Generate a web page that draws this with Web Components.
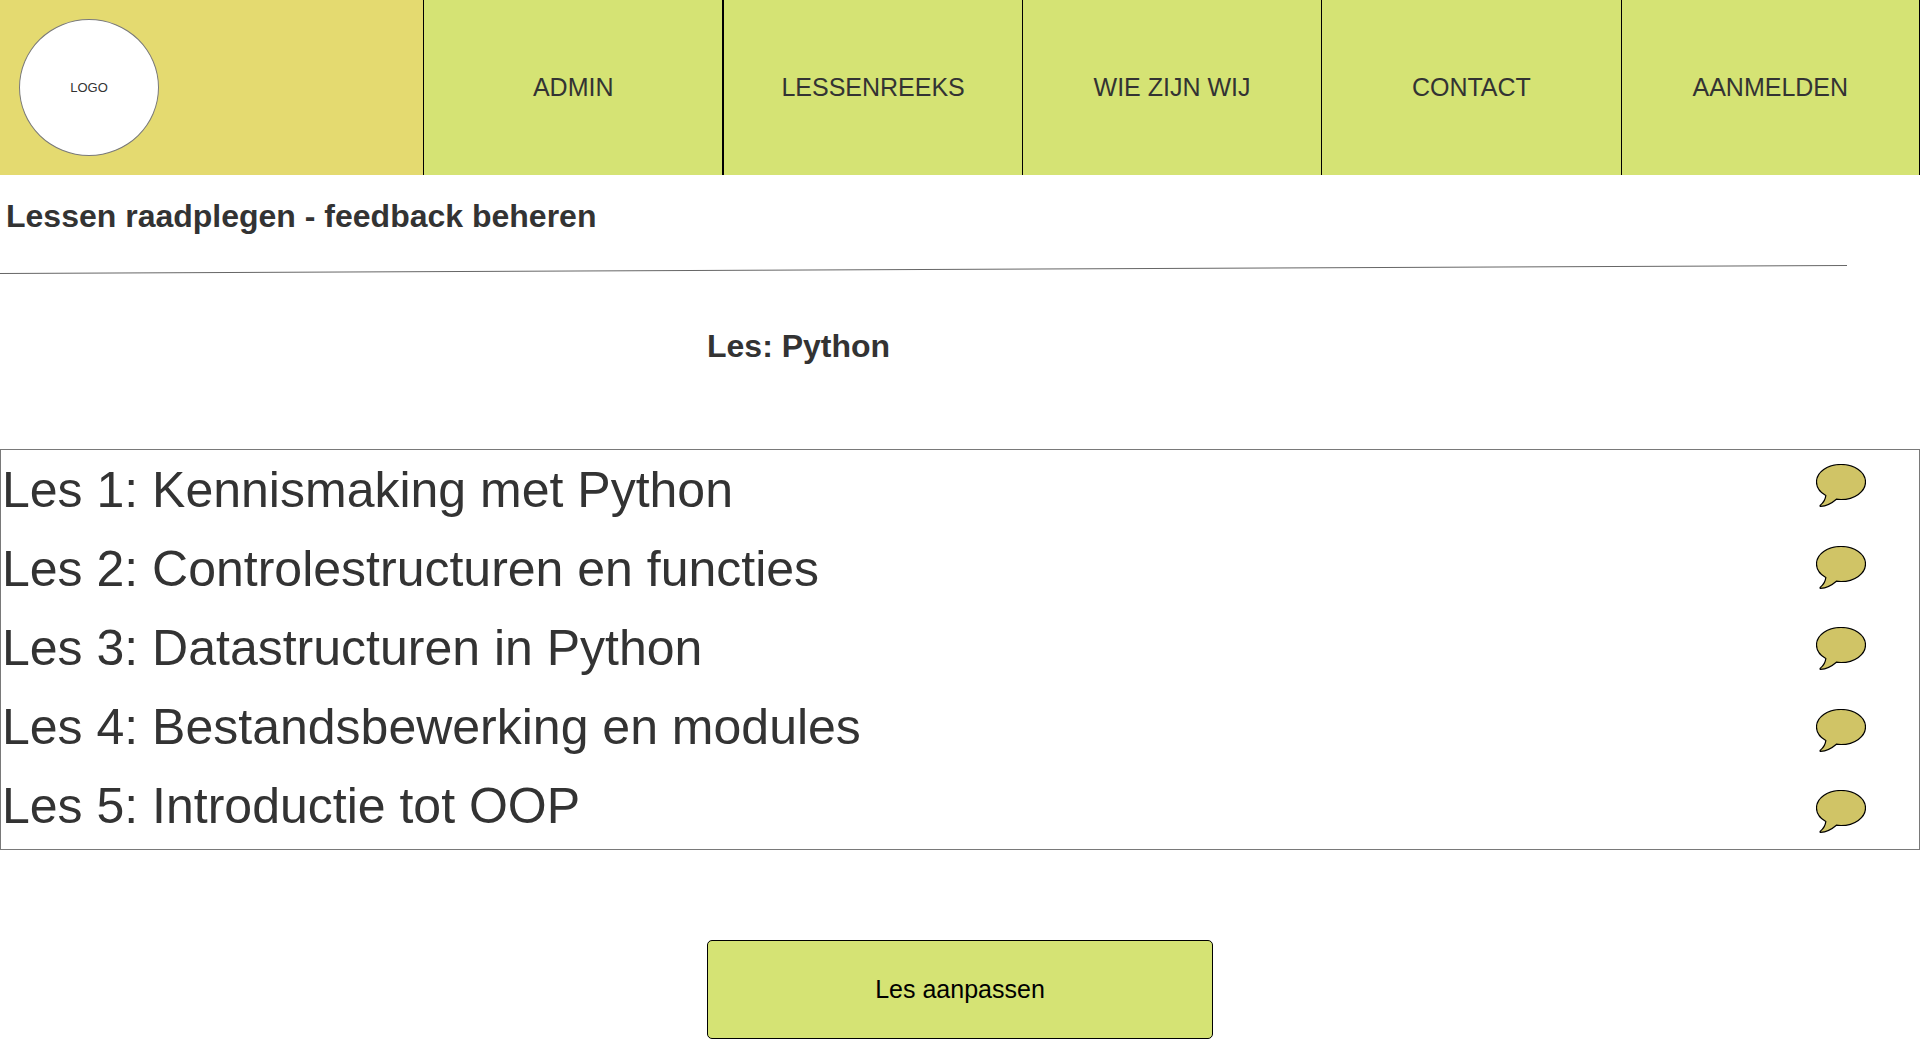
<!DOCTYPE html>
<html lang="nl">
<head>
<meta charset="utf-8">
<title>Lessen raadplegen - feedback beheren</title>
<style>
  body {
    margin: 0;
    background: #fff;
    color: #333;
    font-family: "Liberation Sans", Arial, sans-serif;
    font-size: 25px;
    line-height: 28px;
  }
</style>
</head>
<body>
<lesson-page></lesson-page>

<script>
  const define = (name, html) => {
    const template = document.createElement('template');
    template.innerHTML = html;
    customElements.define(name, class extends HTMLElement {
      constructor() {
        super();
        this.attachShadow({ mode: 'open' }).append(template.content.cloneNode(true));
      }
    });
  };

  define('site-logo', `
    <style>
      :host { display: flex; align-items: center; padding: 0 19px; background: #e4da70; }
      span {
        box-sizing: border-box; width: 140px; height: 137px;
        display: flex; align-items: center; justify-content: center;
        border: 1px solid #797979; border-radius: 50%; background: #fff;
        font-size: 13px; line-height: 16px;
      }
    </style>
    <span><slot></slot></span>`);

  define('nav-item', `
    <style>
      :host { display: flex; border-left: 1px solid #000; background: #d5e374; }
      :host(:last-child) { border-right: 1px solid #000; }
      :host([strong]) { border-left-width: 2px; }
      a {
        flex: 1; display: flex; align-items: center; justify-content: center;
        padding-bottom: 2px; color: inherit; text-decoration: none;
      }
    </style>
    <a href="#"><slot></slot></a>`);

  define('site-header', `
    <style>
      :host { display: grid; grid-template-columns: 423fr 1497fr; height: 175px; }
      nav { display: grid; grid-template-columns: repeat(5, 1fr); }
    </style>
    <site-logo>LOGO</site-logo>
    <nav>
      <nav-item>ADMIN</nav-item>
      <nav-item strong>LESSENREEKS</nav-item>
      <nav-item>WIE ZIJN WIJ</nav-item>
      <nav-item>CONTACT</nav-item>
      <nav-item>AANMELDEN</nav-item>
    </nav>`);

  define('slanted-rule', `
    <style>
      :host { display: block; }
      svg { display: block; width: 96.2%; height: 10px; }
    </style>
    <svg viewBox="0 0 100 10" preserveAspectRatio="none" aria-hidden="true">
      <line x1="0" y1="9.5" x2="100" y2="1.5" stroke="#666" vector-effect="non-scaling-stroke"/>
    </svg>`);

  define('feedback-button', `
    <style>
      :host { display: block; }
      button { display: block; padding: 0; border: 0; background: none; cursor: pointer; }
      svg { display: block; width: 50px; height: 43px; }
    </style>
    <button type="button" aria-label="Feedback">
      <svg viewBox="0 0 50 43" aria-hidden="true">
        <path d="M9.8 31.6C4 28.2.5 23.600.5 18 .5 8.300 11.500.500 25 .500S49.500 8.300 49.500 18 38.500 35.500 25 35.500C23.300 35.500 21.800 35.400 20.400 35.200 16.500 38.600 11 42 4.500 42.400 3.800 42.300 4 41.600 4.400 41.100 7.500 38.500 9.500 35 9.800 31.600Z" fill="#d0c466" stroke="#000" stroke-width="1.2"/>
      </svg>
    </button>`);

  define('lesson-list', `
    <style>
      :host { display: flex; justify-content: space-between; border: 1px solid #797979; }
      ol { list-style: none; margin: 0; padding: 1px 0 3px 1px; font-size: 50px; line-height: 79px; }
      .feedback { display: flex; flex-direction: column; justify-content: space-between; padding: 14px 53px 16px 0; }
    </style>
    <ol>
      <li>Les 1: Kennismaking met Python</li>
      <li>Les 2: Controlestructuren en functies</li>
      <li>Les 3: Datastructuren in Python</li>
      <li>Les 4: Bestandsbewerking en modules</li>
      <li>Les 5: Introductie tot OOP</li>
    </ol>
    <div class="feedback">
      <feedback-button></feedback-button>
      <feedback-button></feedback-button>
      <feedback-button></feedback-button>
      <feedback-button></feedback-button>
      <feedback-button></feedback-button>
    </div>`);

  define('action-button', `
    <style>
      :host { display: block; }
      button {
        width: 100%; height: 99px; padding: 0 0 2px; border: 1px solid #000; border-radius: 5px;
        background: #d5e374; color: #000; font: inherit; cursor: pointer;
      }
    </style>
    <button type="button"><slot></slot></button>`);

  define('lesson-page', `
    <style>
      :host { display: block; }
      h1, h2 { margin: 0; font-size: 32px; line-height: 36px; }
      h1 { padding: 23px 6px 30px; }
      .centre { width: 506px; margin: 0 auto; }
      h2 { padding: 54px 0 85px; }
      action-button { padding-top: 90px; }
    </style>
    <site-header></site-header>
    <main>
      <h1>Lessen raadplegen - feedback beheren</h1>
      <slanted-rule></slanted-rule>
      <h2 class="centre">Les: Python</h2>
      <lesson-list></lesson-list>
      <action-button class="centre">Les aanpassen</action-button>
    </main>`);
</script>
</body>
</html>
